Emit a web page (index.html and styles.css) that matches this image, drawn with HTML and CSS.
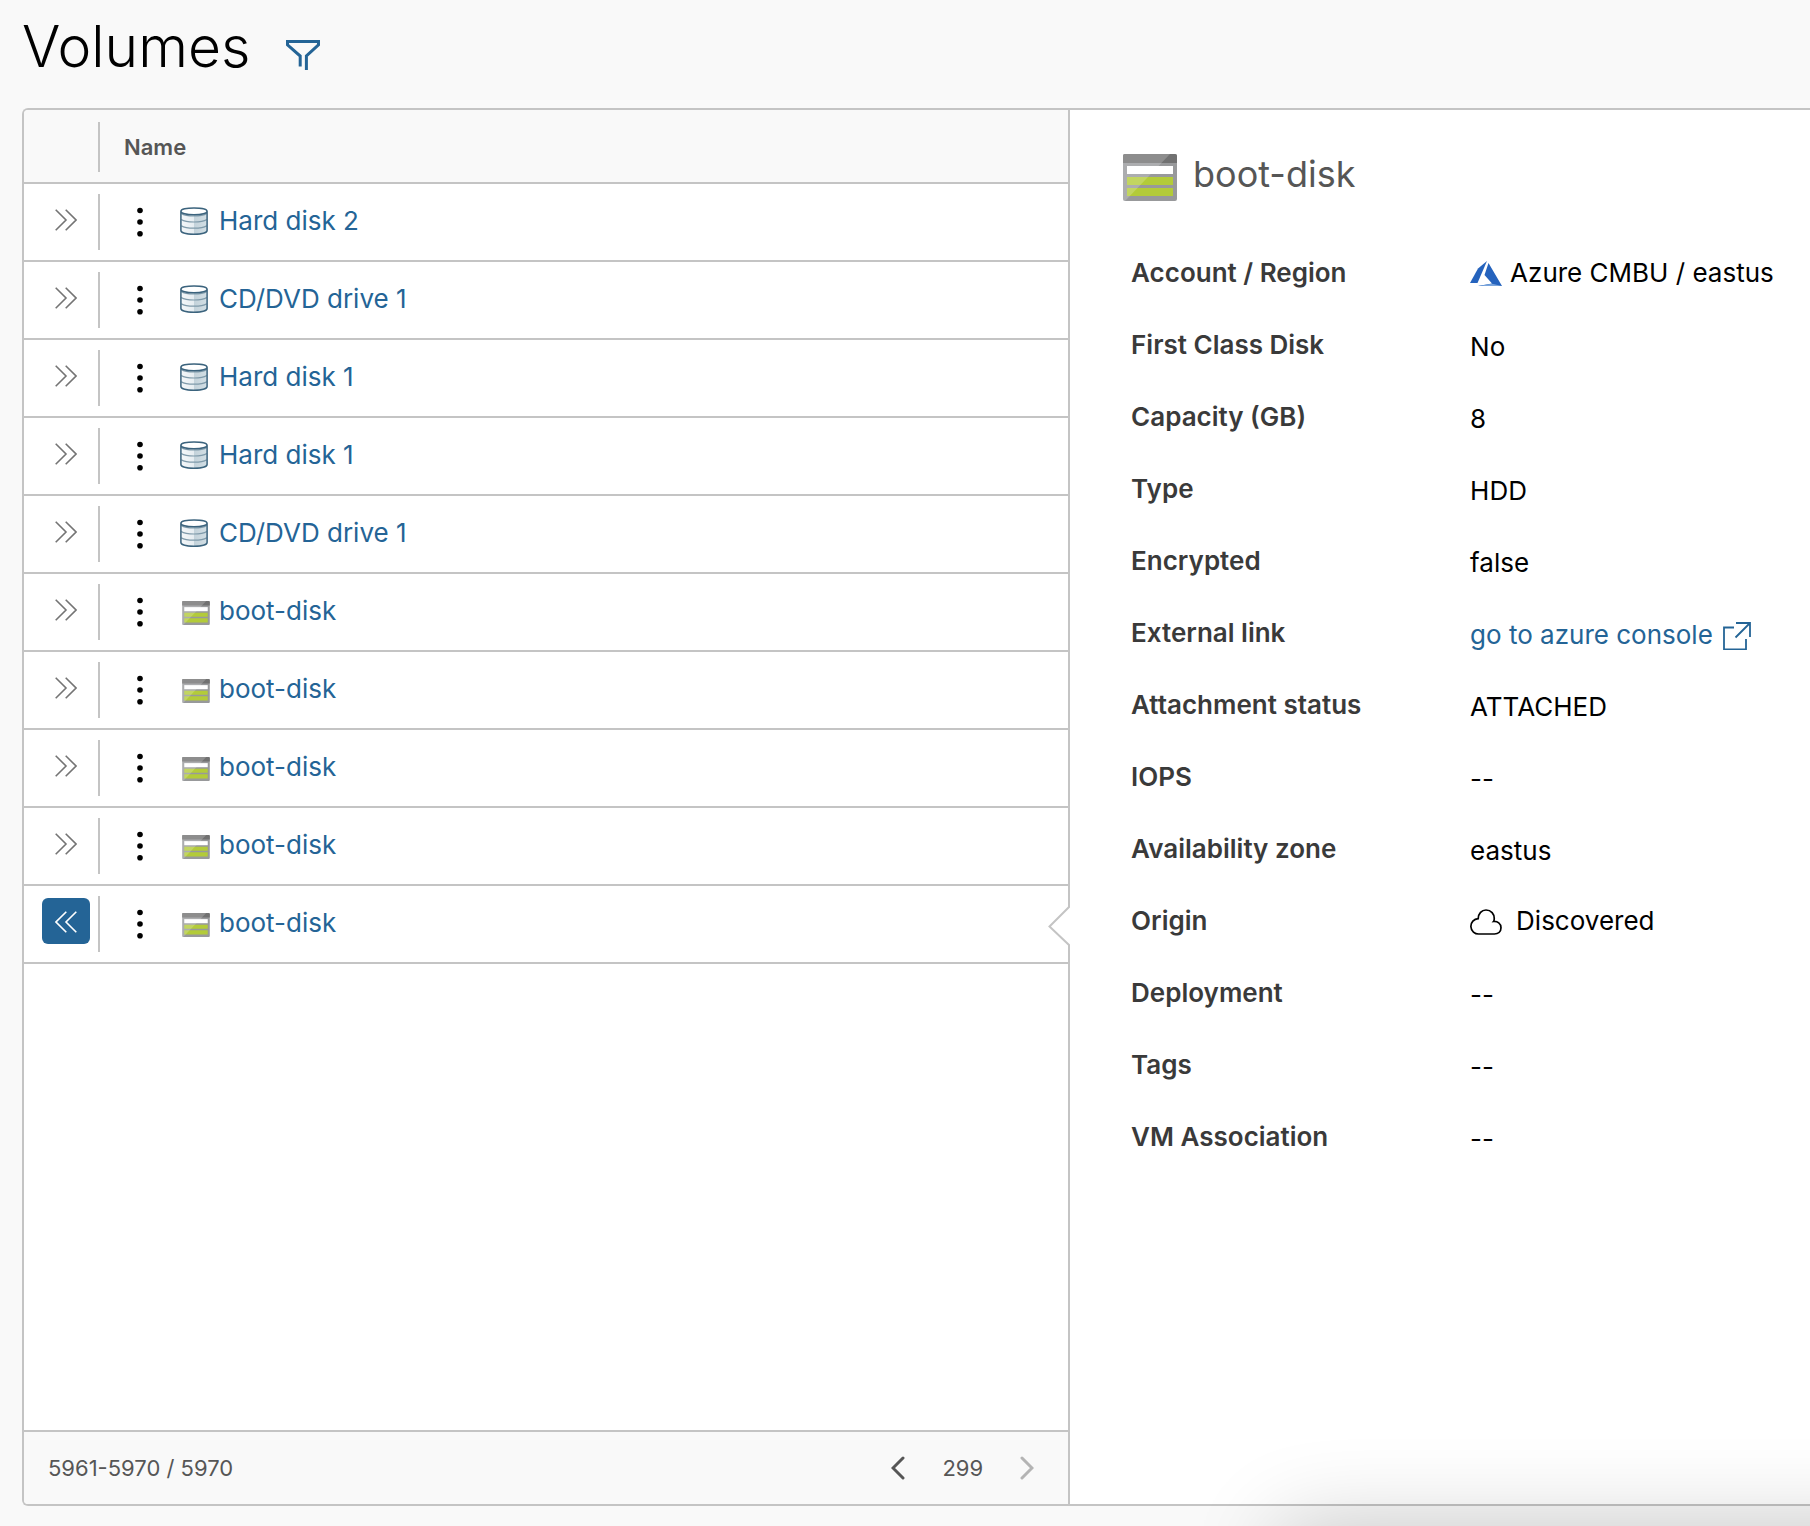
FILE: index.html
```html
<!DOCTYPE html>
<html lang="en">
<head>
<meta charset="utf-8">
<meta name="viewport" content="width=device-width, initial-scale=1">
<title>Volumes</title>
<link rel="stylesheet" href="styles.css">
</head>
<body>
<svg class="sprite" aria-hidden="true">
  <defs>
    <linearGradient id="disk-side" x1="0" x2="1" y1="0" y2="0">
      <stop offset="0" stop-color="#f4f7f9"/><stop offset=".5" stop-color="#e6edf1"/>
      <stop offset=".5" stop-color="#c3d2da"/><stop offset="1" stop-color="#d3dfe5"/>
    </linearGradient>
  </defs>
  <symbol id="expand" viewBox="0 0 22 22"><path d="M.7.7 11 11 .7 21.3M10.700.7 21 11 10.700 21.300" fill="none" stroke="currentColor" stroke-width="1.600"/></symbol>
  <symbol id="dots" viewBox="0 0 6 30"><circle cx="3" cy="3.500" r="2.800"/><circle cx="3" cy="15" r="2.800"/><circle cx="3" cy="26.700" r="2.800"/></symbol>
  <symbol id="disk" viewBox="0 0 28 28">
    <path d="M.9 4v19.500c0 2.200 5.500 3.700 13.100 3.700s13.100-1.500 13.100-3.700V4z" fill="url(#disk-side)"/>
    <path d="M1.200 6.500C4 8.300 8.500 9 14 9s10-.7 12.800-2.500M1.200 12.500C4 14.300 8.500 15 14 15s10-.7 12.800-2.500M1.200 18.700c2.800 1.800 7.300 2.500 12.800 2.500s10-.7 12.800-2.500" fill="none" stroke="#7f9aaa" stroke-width="1.200"/>
    <ellipse cx="14" cy="4.300" rx="13.100" ry="3.500" fill="#fff"/>
    <path d="M.9 4.300v19.200c0 2.200 5.500 3.700 13.100 3.700s13.100-1.500 13.100-3.700V4.300M.9 4.300C.9 2.300 6.500.9 14 .9s13.100 1.400 13.100 3.400S21.500 7.700 14 7.700.9 6.300.9 4.300z" fill="none" stroke="#3b637d" stroke-width="1.500"/>
  </symbol>
  <symbol id="storage" viewBox="0 0 54 47">
    <rect width="54" height="47" rx="2" fill="#98999b"/>
    <path d="M2 0h50a2 2 0 0 1 2 2v7H0V2a2 2 0 0 1 2-2z" fill="#717171"/>
    <path d="M4 12h46v8H4z" fill="#fff"/><path d="M4 23h46v8H4zM4 34h46v8H4z" fill="#b3cb39"/>
    <path d="M2 0h45L2 47a2 2 0 0 1-2-2V2a2 2 0 0 1 2-2z" fill="#fff" opacity=".2"/>
  </symbol>
</svg>

<header class="page-head">
  <h1>Volumes</h1>
  <button class="plain" type="button" aria-label="Filter">
    <svg width="34" height="30" viewBox="0 0 34 30"><path d="M14.200 26.500V16L1.500 4.800V1.500h31v3.300L20.400 16v14" fill="none" stroke="currentColor" stroke-width="3"/></svg>
  </button>
</header>

<main class="panel">
  <section class="list">
    <table>
      <thead><tr><th class="toggle"><div></div></th><th class="name-head" colspan="2" scope="col">Name</th></tr></thead>
      <tbody>
        <tr><td class="toggle"><div><button type="button" aria-label="Expand"><svg><use href="#expand"/></svg></button></div></td><td class="menu"><button class="plain" type="button" aria-label="Actions"><svg><use href="#dots"/></svg></button></td><td><a href="#"><svg class="disk"><use href="#disk"/></svg>Hard disk 2</a></td></tr>
        <tr><td class="toggle"><div><button type="button" aria-label="Expand"><svg><use href="#expand"/></svg></button></div></td><td class="menu"><button class="plain" type="button" aria-label="Actions"><svg><use href="#dots"/></svg></button></td><td><a href="#"><svg class="disk"><use href="#disk"/></svg>CD/DVD drive 1</a></td></tr>
        <tr><td class="toggle"><div><button type="button" aria-label="Expand"><svg><use href="#expand"/></svg></button></div></td><td class="menu"><button class="plain" type="button" aria-label="Actions"><svg><use href="#dots"/></svg></button></td><td><a href="#"><svg class="disk"><use href="#disk"/></svg>Hard disk 1</a></td></tr>
        <tr><td class="toggle"><div><button type="button" aria-label="Expand"><svg><use href="#expand"/></svg></button></div></td><td class="menu"><button class="plain" type="button" aria-label="Actions"><svg><use href="#dots"/></svg></button></td><td><a href="#"><svg class="disk"><use href="#disk"/></svg>Hard disk 1</a></td></tr>
        <tr><td class="toggle"><div><button type="button" aria-label="Expand"><svg><use href="#expand"/></svg></button></div></td><td class="menu"><button class="plain" type="button" aria-label="Actions"><svg><use href="#dots"/></svg></button></td><td><a href="#"><svg class="disk"><use href="#disk"/></svg>CD/DVD drive 1</a></td></tr>
        <tr><td class="toggle"><div><button type="button" aria-label="Expand"><svg><use href="#expand"/></svg></button></div></td><td class="menu"><button class="plain" type="button" aria-label="Actions"><svg><use href="#dots"/></svg></button></td><td><a href="#"><svg class="storage"><use href="#storage"/></svg>boot-disk</a></td></tr>
        <tr><td class="toggle"><div><button type="button" aria-label="Expand"><svg><use href="#expand"/></svg></button></div></td><td class="menu"><button class="plain" type="button" aria-label="Actions"><svg><use href="#dots"/></svg></button></td><td><a href="#"><svg class="storage"><use href="#storage"/></svg>boot-disk</a></td></tr>
        <tr><td class="toggle"><div><button type="button" aria-label="Expand"><svg><use href="#expand"/></svg></button></div></td><td class="menu"><button class="plain" type="button" aria-label="Actions"><svg><use href="#dots"/></svg></button></td><td><a href="#"><svg class="storage"><use href="#storage"/></svg>boot-disk</a></td></tr>
        <tr><td class="toggle"><div><button type="button" aria-label="Expand"><svg><use href="#expand"/></svg></button></div></td><td class="menu"><button class="plain" type="button" aria-label="Actions"><svg><use href="#dots"/></svg></button></td><td><a href="#"><svg class="storage"><use href="#storage"/></svg>boot-disk</a></td></tr>
        <tr class="selected"><td class="toggle"><div><button type="button" aria-label="Collapse" aria-expanded="true"><svg><use href="#expand"/></svg></button></div></td><td class="menu"><button class="plain" type="button" aria-label="Actions"><svg><use href="#dots"/></svg></button></td><td class="pointed"><a href="#"><svg class="storage"><use href="#storage"/></svg>boot-disk</a>
          <svg class="pointer" width="22" height="40" viewBox="0 0 22 40"><path d="M20 0h2v40h-2z" fill="#fff"/><path d="M21 0v1L1.500 20.500 21 39v1" fill="none" stroke="#c4c4c4" stroke-width="2"/></svg></td></tr>
      </tbody>
    </table>
    <footer class="pager">
      <span>5961-5970 / 5970</span>
      <nav aria-label="Pages">
        <button class="plain" type="button" aria-label="Previous page"><svg width="14" height="24" viewBox="0 0 14 24"><path d="M12 2 2 12l10 10" fill="none" stroke="currentColor" stroke-width="3" stroke-linecap="round"/></svg></button>
        <span>299</span>
        <button class="plain" type="button" aria-label="Next page" disabled><svg width="14" height="24" viewBox="0 0 14 24"><path d="m2 2 10 10L2 22" fill="none" stroke="currentColor" stroke-width="3" stroke-linecap="round"/></svg></button>
      </nav>
    </footer>
  </section>

  <section class="detail">
    <h2><svg width="54" height="47"><use href="#storage"/></svg>boot-disk</h2>
    <dl>
      <dt>Account / Region</dt>
      <dd class="with-icon"><svg width="32" height="26" viewBox="0 0 32 26"><path d="M17 0 8 7.500 0 22h7.500z" fill="#2563bd"/><path d="m18.500 2 13.500 23H8l14-2.500-7.500-8.500z" fill="#2563bd"/><path d="M8 25 22 22.800 32 25z" fill="#7aa5dc"/></svg>Azure CMBU / eastus</dd>
      <dt>First Class Disk</dt><dd>No</dd>
      <dt>Capacity (GB)</dt><dd>8</dd>
      <dt>Type</dt><dd>HDD</dd>
      <dt>Encrypted</dt><dd>false</dd>
      <dt>External link</dt>
      <dd><a href="#">go to azure console<svg width="28" height="28" viewBox="0 0 28 28"><path d="M11 5.500H1v22h22V17M13 1h14v14M12.500 15.500 27 1" fill="none" stroke="currentColor" stroke-width="1.800"/></svg></a></dd>
      <dt>Attachment status</dt><dd>ATTACHED</dd>
      <dt>IOPS</dt><dd>--</dd>
      <dt>Availability zone</dt><dd>eastus</dd>
      <dt>Origin</dt>
      <dd class="with-icon origin"><svg width="32" height="26" viewBox="0 0 32 26"><path d="M9 25a7.700 7.700 0 0 1-.8-15.400C8.400 4.600 11.600 1 16 1c5 0 8.600 4 8.200 9.200 0 1 0 1.400-.7 2.300C27.500 12 31 14.600 31 18.700S28 25 24.500 25z" fill="none" stroke="currentColor" stroke-width="1.700"/></svg>Discovered</dd>
      <dt>Deployment</dt><dd>--</dd>
      <dt>Tags</dt><dd>--</dd>
      <dt>VM Association</dt><dd>--</dd>
    </dl>
  </section>
</main>
<div class="tray"></div>
</body>
</html>
```
FILE: styles.css
```css
* { box-sizing: border-box; }
body {
  margin: 0;
  min-height: 100vh;
  display: flex;
  flex-direction: column;
  padding: 0 0 20px 22px;
  background: #f9f9f9;
  color: #000;
  font: 26px/36px Inter, "Open Sans", sans-serif;
}
.sprite { position: absolute; width: 0; height: 0; }
svg { display: block; flex: none; }
a { color: #246496; text-decoration: none; }
button { font: inherit; cursor: pointer; }
.plain { padding: 0; border: 0; background: none; color: inherit; display: block; }

.page-head {
  display: flex;
  align-items: center;
  gap: 36px;
  height: 108px;
  padding-bottom: 14px;
}
.page-head h1 { margin: 0; font-size: 57px; line-height: 64px; font-weight: 300; }
.page-head .plain { color: #246496; padding-top: 16px; }

.panel {
  flex: 1;
  display: grid;
  grid-template-columns: 41fr 29fr;
  border: 2px solid #c4c4c4;
  border-right: 0;
  border-radius: 6px 0 0 6px;
  background: #fff;
}
.list { display: flex; flex-direction: column; border-right: 2px solid #c4c4c4; }
table { width: 100%; border-collapse: separate; border-spacing: 0; }
th, td { padding: 0; border-bottom: 2px solid #c4c4c4; text-align: left; }
th { background: #f9f9f9; }
th:first-child { border-top-left-radius: 4px; }
.toggle { width: 76px; padding: 10px 0; }
th.toggle { padding-top: 12px; }
.toggle div { height: 56px; border-right: 2px solid #c4c4c4; padding: 2px 0 0 18px; }
th.toggle div { height: 50px; }
.toggle button {
  display: flex;
  align-items: center;
  justify-content: center;
  width: 48px;
  height: 46px;
  padding: 2px 0 0;
  border: 0;
  border-radius: 6px;
  background: none;
  color: #747474;
}
.toggle button svg { width: 22px; height: 22px; }
.selected .toggle button { background: #246496; color: #fff; }
.selected .toggle svg { transform: scaleX(-1); }
.name-head { padding: 2px 0 0 24px; font-size: 22px; font-weight: 600; color: #565656; }
.menu { width: 80px; padding-left: 37px; }
.menu svg { width: 6px; height: 30px; }
td a { display: flex; align-items: center; gap: 11px; padding-bottom: 2px; }
.disk { width: 28px; height: 28px; }
.storage { width: 28px; height: 24px; margin: 3px -2px 0 2px; }
.pointed { position: relative; }
.pointer { position: absolute; right: -2px; top: 20px; }

.pager {
  margin-top: auto;
  display: flex;
  align-items: center;
  justify-content: space-between;
  height: 74px;
  padding: 0 34px 0 24px;
  border-top: 2px solid #c4c4c4;
  border-radius: 0 0 0 4px;
  background: #f9f9f9;
  color: #565656;
  font-size: 22px;
}
.pager nav { display: flex; align-items: center; gap: 37px; }
.pager button:disabled { color: #b4b4b4; }

.detail { min-width: 0; padding: 38px 32px 40px 53px; }
h2 {
  display: flex;
  align-items: center;
  gap: 16px;
  margin: 0 0 55px;
  height: 52px;
  font-size: 36px;
  line-height: 48px;
  font-weight: 400;
  color: #565656;
}
h2 svg { margin-top: 6px; }
dl {
  display: grid;
  grid-template-columns: 339px 1fr;
  grid-auto-rows: 72px;
  margin: 0;
  padding-left: 8px;
}
dt { font-weight: 600; color: #3a3a3a; }
dd { margin: 0; padding-top: 2px; white-space: nowrap; }
dd a { display: flex; gap: 10px; }
dd a svg { margin-top: 5px; }
.with-icon { display: flex; gap: 8px; padding-top: 0; }
.with-icon svg { margin-top: 6px; }
.origin { gap: 14px; }

/* Drop shadow of the tray docked just below the window edge */
.tray {
  position: fixed;
  top: 100%;
  right: -200px;
  width: 730px;
  height: 200px;
  box-shadow: 0 0 90px rgba(0, 0, 0, .2);
  pointer-events: none;
}
```
